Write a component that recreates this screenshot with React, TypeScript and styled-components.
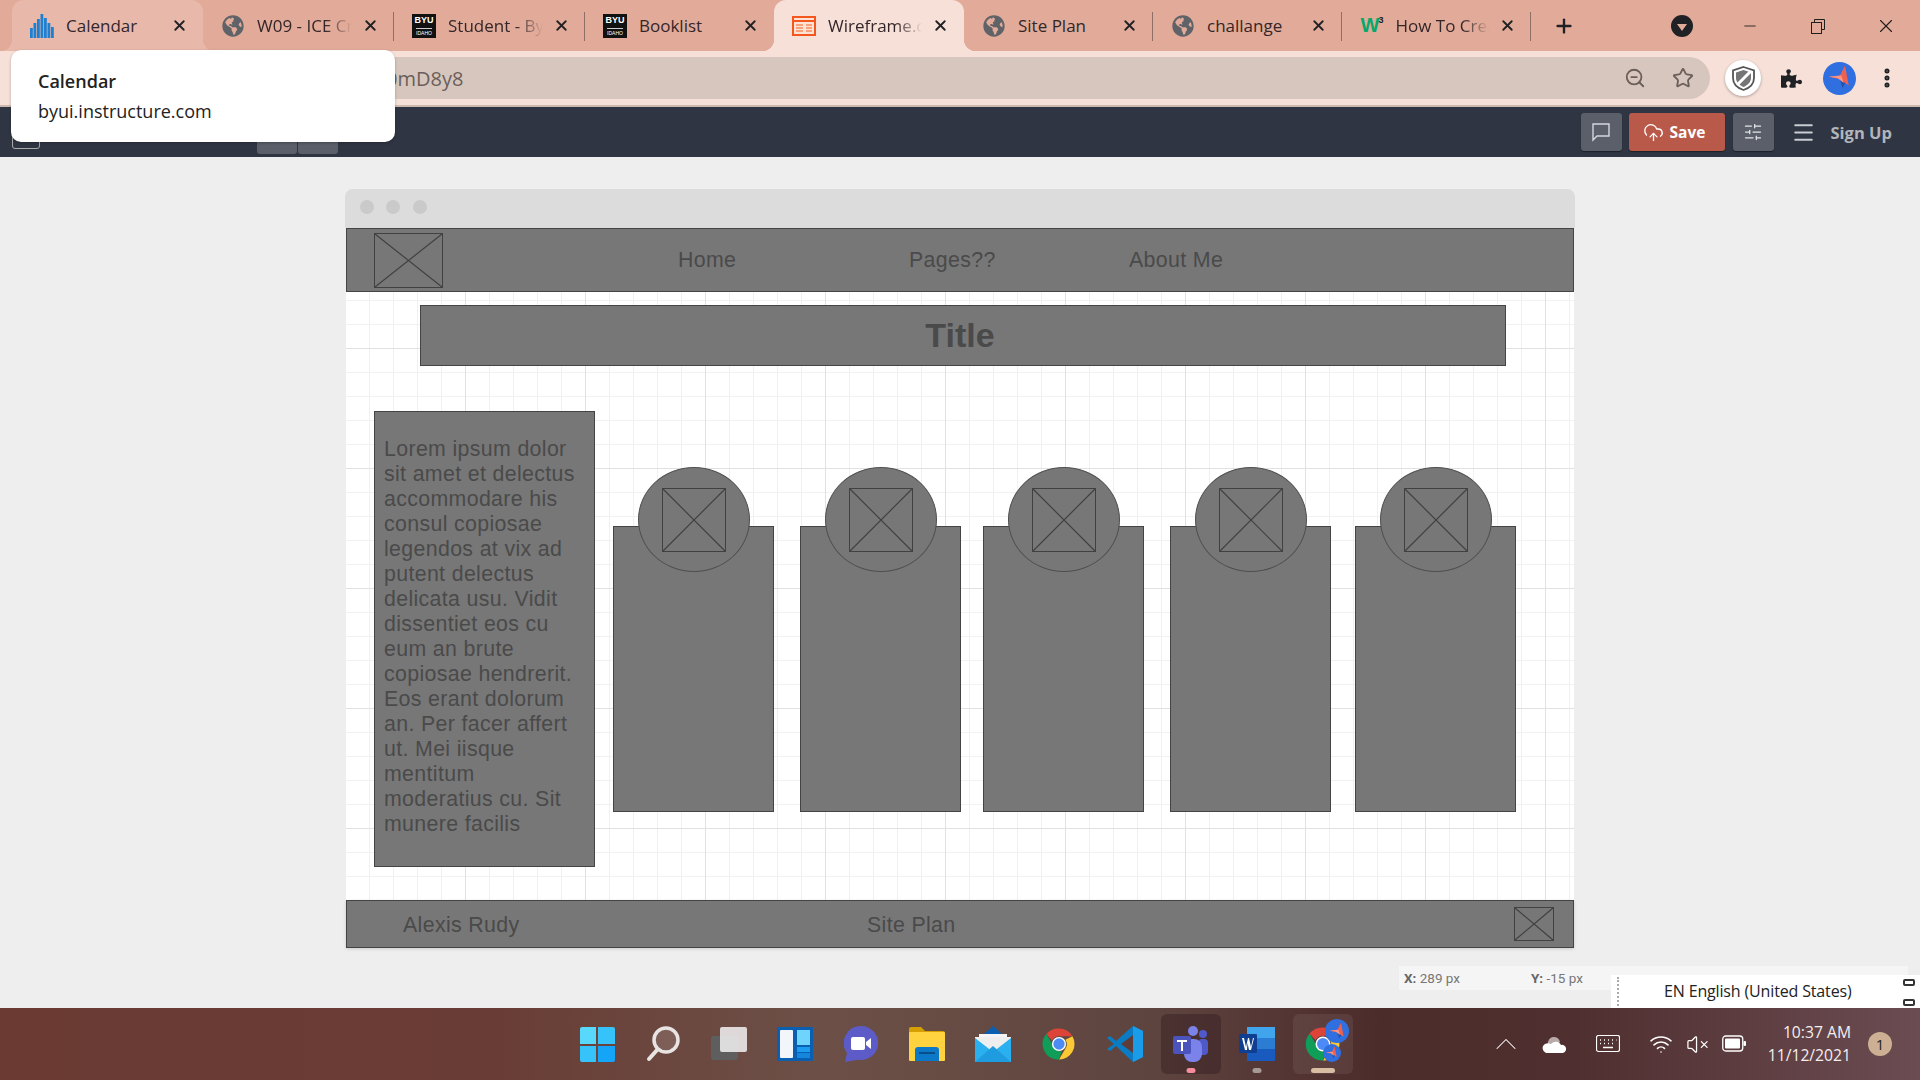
import { FC, ReactNode } from 'react';
import styled, { createGlobalStyle, css } from 'styled-components';
import {
	ChevronUp,
	CloudUpload,
	Menu,
	Minus,
	MoreVertical,
	Plus,
	SlidersHorizontal,
	Star,
	VolumeX,
	Wifi,
	X,
	ZoomOut,
} from 'lucide-react';
import { FaGlobeAmericas, FaPuzzlePiece } from 'react-icons/fa';

const GlobalStyle = createGlobalStyle`
	html, body {
		margin: 0;
		padding: 0;
		height: 100%;
		overflow: hidden;
	}
	* {
		box-sizing: border-box;
	}
`;

const Screen = styled.div`
	position: relative;
	display: flex;
	flex-direction: column;
	width: 1920px;
	height: 1080px;
	overflow: hidden;
	background: #eeeeee;
	font-family: 'Open Sans', 'Liberation Sans', sans-serif;
`;

/* browser tabs */
const TabStrip = styled.div`
	display: flex;
	align-items: stretch;
	height: 51px;
	padding-left: 12px;
	background: #e2ab99;
`;

const flare = (color: string) => css`
	&::before,
	&::after {
		content: '';
		position: absolute;
		bottom: 0;
		width: 12px;
		height: 12px;
	}
	&::before {
		left: -12px;
		background: radial-gradient(circle at 0 0, transparent 12px, ${color} 12.5px);
	}
	&::after {
		right: -12px;
		background: radial-gradient(circle at 100% 0, transparent 12px, ${color} 12.5px);
	}
`;

const Tab = styled.div<{ $state?: 'active' | 'hover'; $sep?: boolean; $width: number }>`
	position: relative;
	display: flex;
	align-items: center;
	flex: none;
	width: ${(p) => p.$width}px;
	padding: 0 15px 0 18px;
	border-radius: 12px 12px 0 0;
	background: ${(p) =>
		p.$state === 'active' ? '#f6e0d8' : p.$state === 'hover' ? '#e8b9aa' : 'transparent'};

	${(p) => p.$state === 'active' && flare('#f6e0d8')}
	${(p) => p.$state === 'hover' && flare('#e8b9aa')}

	${(p) =>
		p.$sep &&
		css`
			&::after {
				content: '';
				position: absolute;
				right: 0;
				top: 12px;
				bottom: 10px;
				width: 1px;
				background: #8d6f65;
			}
		`}
`;

const TabIcon = styled.span`
	display: flex;
	align-items: center;
	justify-content: center;
	flex: none;
	width: 24px;
	height: 24px;
	color: #5f6368;
`;

const TabLabel = styled.span<{ $fade?: boolean }>`
	flex: 1;
	margin-left: 12px;
	overflow: hidden;
	white-space: nowrap;
	font-size: 17px;
	color: #33262a;
	${(p) => p.$fade && 'mask-image: linear-gradient(to right, #000 72%, transparent 100%);'}
`;

const TabClose = styled.span`
	display: flex;
	flex: none;
	margin-left: 10px;
	color: #202124;
`;

const ByuBadge = styled.span`
	display: flex;
	flex-direction: column;
	align-items: center;
	justify-content: center;
	width: 24px;
	height: 24px;
	background: #111;
	color: #fff;
	font-family: 'Liberation Sans', sans-serif;
	font-weight: 700;
	font-size: 9px;
	line-height: 1;
	overflow: hidden;

	small {
		margin-top: 3px;
		padding-top: 2px;
		border-top: 1px solid #ccc;
		font-size: 5px;
		font-weight: 400;
	}
`;

const W3Badge = styled.span`
	color: #04aa6d;
	font-family: 'Liberation Sans', sans-serif;
	font-weight: 700;
	font-size: 20px;
	letter-spacing: -1px;

	sup {
		font-size: 9px;
		color: #222;
		vertical-align: 9px;
		line-height: 0;
	}
`;

const NewTab = styled.span`
	display: flex;
	align-items: center;
	margin-left: 22px;
	color: #202124;
`;

const WindowControls = styled.div`
	display: flex;
	align-items: center;
	margin-left: auto;
	color: #1f1f1f;
`;

const TabSearch = styled.span`
	display: flex;
	align-items: center;
	justify-content: center;
	width: 22px;
	height: 22px;
	margin-right: 23px;
	border-radius: 50%;
	background: #202124;

	&::after {
		content: '';
		margin-top: 3px;
		border-left: 5px solid transparent;
		border-right: 5px solid transparent;
		border-top: 7px solid #e2ab99;
	}
`;

const WindowButton = styled.span<{ $width: number }>`
	display: flex;
	justify-content: center;
	width: ${(p) => p.$width}px;
`;

/* address bar row */
const Toolbar = styled.div`
	display: flex;
	align-items: center;
	height: 56px;
	padding-left: 150px;
	background: #f6e0d8;
	border-bottom: 2px solid #cdb9b0;
`;

const Omnibox = styled.div`
	display: flex;
	align-items: center;
	width: 1560px;
	height: 42px;
	padding: 0 16px 0 236px;
	border-radius: 21px;
	background: #d7c6be;
	color: #6b5f5a;
	font-size: 20px;
`;

const OmniboxIcons = styled.div`
	display: flex;
	align-items: center;
	gap: 26px;
	margin-left: auto;
	color: #6b5f5a;
`;

const ToolbarIcons = styled.div`
	display: flex;
	align-items: center;
	margin-left: 15px;
	color: #202124;
`;

const ShieldButton = styled.span`
	display: flex;
	align-items: center;
	justify-content: center;
	width: 36px;
	height: 36px;
	border-radius: 50%;
	background: #fff;
	box-shadow: 0 1px 3px rgba(0, 0, 0, 0.3);
`;

const Avatar = styled.span<{ $size: number }>`
	display: flex;
	align-items: center;
	justify-content: center;
	flex: none;
	width: ${(p) => p.$size}px;
	height: ${(p) => p.$size}px;
	border-radius: 50%;
	background: #2f6fe0;
`;

const ToolbarAvatar = styled(Avatar)`
	margin-left: 21px;
`;

const PuzzleWrap = styled.span`
	display: flex;
	margin-left: 20px;
`;

const DotsWrap = styled.span`
	display: flex;
	margin-left: 19px;
`;

/* wireframe.cc app bar */
const AppBar = styled.div`
	position: relative;
	display: flex;
	align-items: center;
	flex: none;
	height: 50px;
	padding-right: 28px;
	background: #2f3542;
	color: #e4e6e9;
`;

const AppLogo = styled.span`
	width: 28px;
	height: 34px;
	margin-left: 12px;
	border: 1px solid #aaa;
	border-radius: 3px;
`;

const AppGroup = styled.div`
	display: flex;
	gap: 1px;
	margin: 6px 0 0 217px;
	height: 38px;
`;

const AppGroupButton = styled.span`
	width: 40px;
	border-radius: 3px;
	background: #5a5f69;
`;

const AppActions = styled.div`
	display: flex;
	align-items: center;
	margin-left: auto;
	font-size: 16px;
	font-weight: 700;
`;

const SquareButton = styled.span`
	display: flex;
	align-items: center;
	justify-content: center;
	width: 41px;
	height: 38px;
	border-radius: 3px;
	background: #5a5f69;
	box-shadow: 0 1px 1px rgba(0, 0, 0, 0.4);
`;

const SaveButton = styled.span`
	display: flex;
	align-items: center;
	gap: 6px;
	width: 96px;
	height: 38px;
	margin: 0 8px 0 7px;
	padding-left: 14px;
	border-radius: 3px;
	background: #b9594a;
	box-shadow: 0 1px 1px rgba(0, 0, 0, 0.4);
	color: #fff;
	font-size: 15.5px;
`;

const SignUp = styled.span`
	margin-left: 15px;
	font-size: 16.5px;
	color: #b2b6bc;
`;

const MenuWrap = styled.span`
	display: flex;
	margin-left: 17px;
	color: #c9ccd1;
`;

/* the wireframe canvas */
const Page = styled.div`
	flex: 1;
	padding-top: 32px;
`;

const Frame = styled.div`
	width: 1230px;
	margin-left: 345px;
	border-radius: 8px 8px 0 0;
`;

const FrameTitle = styled.div`
	display: flex;
	align-items: center;
	gap: 12.3px;
	height: 39px;
	padding: 0 0 3px 15px;
	background: #dcdcdc;
	border-radius: 8px 8px 0 0;
`;

const FrameDot = styled.span`
	width: 14px;
	height: 14px;
	border-radius: 50%;
	background: #cacaca;
`;

const WireBar = styled.div<{ $height: number }>`
	display: flex;
	align-items: center;
	height: ${(p) => p.$height}px;
	margin: 0 1px;
	background: #777777;
	border: 1px solid #444444;
	color: #4a4a4a;
	font-family: 'Liberation Sans', sans-serif;
	font-size: 21.33px;
	letter-spacing: 0.35px;
`;

const FooterBar = styled(WireBar)`
	padding-top: 2px;
	box-shadow: 0 1px 3px rgba(0, 0, 0, 0.15);
`;

const WireLabel = styled.span<{ $width: number }>`
	flex: none;
	width: ${(p) => p.$width}px;
`;

const FooterThumb = styled.span`
	display: flex;
	flex: none;
	margin-top: -2px;
`;

const PlaceholderBox = styled.svg<{ $width: number; $height: number }>`
	display: block;
	flex: none;
	width: ${(p) => p.$width}px;
	height: ${(p) => p.$height}px;
	stroke: #414141;
	fill: none;
`;

const Canvas = styled.div`
	height: 608px;
	margin: 0 1px;
	padding-top: 13px;
	background-color: #fff;
	background-image: linear-gradient(#e1e1e1 1px, transparent 1px),
		linear-gradient(90deg, #e1e1e1 1px, transparent 1px),
		linear-gradient(#f1f1f1 1px, transparent 1px),
		linear-gradient(90deg, #f1f1f1 1px, transparent 1px);
	background-size: 120px 120px, 120px 120px, 24px 24px, 24px 24px;
	background-position: 0 56px, 119px 0, 0 8px, 23px 0;
`;

const TitleBar = styled.div`
	display: flex;
	align-items: center;
	justify-content: center;
	width: 1086px;
	height: 61px;
	margin-left: 74px;
	padding-right: 6px;
	background: #777777;
	border: 1px solid #444444;
	color: #4a4a4a;
	font-family: 'Liberation Sans', sans-serif;
	font-size: 34px;
	font-weight: 700;
`;

const ContentRow = styled.div`
	display: flex;
	align-items: flex-start;
	margin-top: 45px;
	padding-left: 28px;
`;

const TextPanel = styled.div`
	flex: none;
	width: 221px;
	height: 456px;
	padding: 25px 9px 0;
	background: #777777;
	border: 1px solid #444444;
	color: #4a4a4a;
	font-family: 'Liberation Sans', sans-serif;
	font-size: 21.33px;
	line-height: 25px;
	letter-spacing: 0.35px;
`;

const Card = styled.div<{ $gap: number }>`
	position: relative;
	flex: none;
	width: 161px;
	height: 286px;
	margin: 115px 0 0 ${(p) => p.$gap}px;
	background: #777777;
	border: 1px solid #444444;
`;

const CardBadge = styled.div`
	position: absolute;
	top: -60px;
	left: 24px;
	display: flex;
	align-items: center;
	justify-content: center;
	width: 112px;
	height: 105px;
	border-radius: 50%;
	background: #777777;
	border: 1px solid #4f4f4f;
`;

const CoordStrip = styled.div`
	display: flex;
	width: 509px;
	height: 24px;
	margin: 18px 0 0 1399px;
	padding-left: 5px;
	align-items: center;
	background: #f5f5f5;
	color: #777;
	font-family: 'Roboto', sans-serif;
	font-size: 13.5px;

	b {
		color: #666;
	}
`;

const CoordCell = styled.span`
	width: 127px;
`;

const LanguageBar = styled.div`
	position: absolute;
	right: 0;
	bottom: 72px;
	display: flex;
	align-items: center;
	width: 309px;
	height: 33px;
	padding: 0 0 2px 53px;
	background: #fff;
	color: #222;
	font-family: 'Open Sans', sans-serif;
	font-size: 16px;
	letter-spacing: -0.15px;

	&::before {
		content: '';
		position: absolute;
		left: 6px;
		top: 2px;
		bottom: 2px;
		border-left: 2px dotted #aaa;
	}
`;

const LanguageIcons = styled.span`
	position: absolute;
	right: 5px;
	top: 4px;
	bottom: 2px;
	display: flex;
	flex-direction: column;
	justify-content: space-between;

	i {
		display: block;
		width: 12px;
		height: 7px;
		border: 2px solid #333;
		border-radius: 2px;
	}
`;

/* windows taskbar */
const Taskbar = styled.div`
	position: relative;
	display: flex;
	align-items: center;
	flex: none;
	height: 72px;
	padding-left: 567px;
	background: linear-gradient(
		90deg,
		#6a3a33 0%,
		#693c35 25%,
		#6c5047 43%,
		#5e443f 60%,
		#4c2b2b 72%,
		#4f2f2f 82%,
		#6b4c52 100%
	);
`;

const Slot = styled.div<{ $state?: 'open' | 'active' }>`
	position: relative;
	display: flex;
	align-items: center;
	justify-content: center;
	flex: none;
	width: 60px;
	height: 60px;
	margin-right: 6px;
	border-radius: 6px;
	background: ${(p) =>
		p.$state === 'open'
			? 'rgba(40, 20, 25, 0.35)'
			: p.$state === 'active'
			? 'rgba(255, 255, 255, 0.07)'
			: 'transparent'};
`;

const RunDot = styled.span<{ $color: string; $width: number }>`
	position: absolute;
	left: 50%;
	bottom: 1px;
	width: ${(p) => p.$width}px;
	height: 5px;
	transform: translateX(-50%);
	border-radius: 3px;
	background: ${(p) => p.$color};
`;

const SlotBadge = styled.span<{ $top: number; $left: number }>`
	position: absolute;
	top: ${(p) => p.$top}px;
	left: ${(p) => p.$left}px;
	display: flex;
`;

const Tray = styled.div`
	position: absolute;
	right: 0;
	top: 0;
	bottom: 0;
	display: flex;
	align-items: center;
	width: 436px;
	color: #fff;
`;

const TrayIcon = styled.span<{ $width: number }>`
	display: flex;
	justify-content: center;
	flex: none;
	width: ${(p) => p.$width}px;
`;

const Clock = styled.div`
	flex: none;
	width: 92px;
	text-align: right;
	font-size: 15.7px;
	line-height: 23px;
	color: #f4eeee;
	white-space: nowrap;
`;

const NotifyBadge = styled.span`
	display: flex;
	align-items: center;
	justify-content: center;
	flex: none;
	width: 24px;
	height: 24px;
	margin-left: 17px;
	border-radius: 50%;
	background: #cdb094;
	color: #222;
	font-size: 15px;
`;

const ShellTooltip = styled.div`
	position: absolute;
	left: 11px;
	top: 50px;
	display: flex;
	flex-direction: column;
	justify-content: center;
	gap: 6px;
	width: 384px;
	height: 92px;
	padding-left: 27px;
	border-radius: 10px;
	background: #fff;
	box-shadow: 0 1px 3px rgba(0, 0, 0, 0.25);
	color: #222;
	font-size: 18px;
	line-height: 24px;

	strong {
		font-weight: 600;
	}
`;

const CalendarIcon = () => (
	<svg width="24" height="24" viewBox="0 0 24 24" fill="#1f7fd0">
		<rect x="0" y="14" width="2.800" height="10" />
		<rect x="3.500" y="9" width="2.800" height="15" />
		<rect x="7" y="5" width="2.800" height="19" />
		<rect x="10.500" y="0" width="2.800" height="24" />
		<rect x="14" y="4" width="2.800" height="20" />
		<rect x="17.500" y="9" width="2.800" height="15" />
		<rect x="21" y="13" width="2.800" height="11" />
	</svg>
);

const WireframeIcon = () => (
	<svg width="24" height="20" viewBox="0 0 24 20">
		<rect x="1" y="1" width="22" height="18" fill="#fde3d5" stroke="#f4561d" strokeWidth="2" />
		<path d="M1 5h22" stroke="#f4561d" strokeWidth="2" />
		<path d="M4 9h7M4 12h7M4 15h7M14 9h6M14 12h6M14 15h6" stroke="#f58a5c" strokeWidth="1.500" />
	</svg>
);

const Globe = () => <FaGlobeAmericas size={22} />;

const Byu = () => (
	<ByuBadge>
		BYU
		<small>IDAHO</small>
	</ByuBadge>
);

const W3 = () => (
	<W3Badge>
		W<sup>3</sup>
	</W3Badge>
);

interface ITab {
	label: string;
	icon: ReactNode;
	width: number;
	state?: 'active' | 'hover';
	sep?: boolean;
	fade?: boolean;
}

const tabs: ITab[] = [
	{ label: 'Calendar', icon: <CalendarIcon />, width: 191, state: 'hover' },
	{ label: 'W09 - ICE Crud', icon: <Globe />, width: 191, sep: true, fade: true },
	{ label: 'Student - Byui', icon: <Byu />, width: 191, sep: true, fade: true },
	{ label: 'Booklist', icon: <Byu />, width: 189 },
	{ label: 'Wireframe.cc', icon: <WireframeIcon />, width: 190, state: 'active', fade: true },
	{ label: 'Site Plan', icon: <Globe />, width: 189, sep: true },
	{ label: 'challange', icon: <Globe />, width: 188.5, sep: true },
	{ label: 'How To Create', icon: <W3 />, width: 189.5, sep: true, fade: true },
];

const loremText =
	'Lorem ipsum dolor sit amet et delectus accommodare his consul copiosae legendos at vix ad putent delectus delicata usu. Vidit dissentiet eos cu eum an brute copiosae hendrerit. Eos erant dolorum an. Per facer affert ut. Mei iisque mentitum moderatius cu. Sit munere facilis';

const cardGaps = [18, 26, 22, 26, 24];

const Placeholder: FC<{ width: number; height: number }> = ({ width, height }) => (
	<PlaceholderBox $width={width} $height={height} viewBox={`0 0 ${width} ${height}`}>
		<rect x="0.5" y="0.5" width={width - 1} height={height - 1} />
		<path d={`M1 1L${width - 1} ${height - 1}M${width - 1} 1L1 ${height - 1}`} strokeWidth="1.2" />
	</PlaceholderBox>
);

const StartIcon = () => (
	<svg width="35" height="35" viewBox="0 0 35 35">
		<path d="M2 0h14v17H0V2a2 2 0 0 1 2-2z" fill="#58d8fb" />
		<path d="M18 0h15a2 2 0 0 1 2 2v15H18z" fill="#36c3fa" />
		<path d="M0 19h16v16H2a2 2 0 0 1-2-2z" fill="#36c3fa" />
		<path d="M18 19h17v14a2 2 0 0 1-2 2H18z" fill="#14a5f8" />
	</svg>
);

const SearchIcon = () => (
	<svg width="34" height="36" viewBox="0 0 34 36" fill="rgba(255,255,255,0.13)" stroke="#e8e4e2" strokeWidth="3.500" strokeLinecap="round">
		<circle cx="20" cy="14" r="12" />
		<path d="M11 24L3 33" strokeWidth="4" />
	</svg>
);

const TaskViewIcon = () => (
	<svg width="36" height="34" viewBox="0 0 36 34">
		<rect x="0" y="9" width="27" height="24" rx="2" fill="#5e5e5e" />
		<rect x="9" y="0" width="27" height="25" rx="2" fill="#f2f2f2" fillOpacity="0.85" />
	</svg>
);

const WidgetsIcon = () => (
	<svg width="36" height="34" viewBox="0 0 36 34">
		<rect width="36" height="34" rx="1" fill="#0a5fb0" />
		<rect x="3" y="3" width="13" height="28" rx="1" fill="#f2f6fa" />
		<rect x="20" y="3" width="13" height="15" fill="#6fd4fb" />
		<rect x="20" y="20" width="13" height="5" fill="#1b9cf0" />
		<rect x="20" y="26" width="13" height="5" fill="#1486dc" />
	</svg>
);

const MeetIcon = () => (
	<svg width="34" height="36" viewBox="0 0 34 36">
		<path d="M17 0a17 17 0 1 1-3 33.700L1 36l2-9A17 17 0 0 1 17 0z" fill="#5c5bc8" />
		<rect x="7" y="11" width="14" height="13" rx="2" fill="#fff" />
		<path d="M22 16l5-4v11l-5-4z" fill="#fff" />
	</svg>
);

const ExplorerIcon = () => (
	<svg width="36" height="34" viewBox="0 0 36 34">
		<path d="M0 2a2 2 0 0 1 2-2h10l4 4h18a2 2 0 0 1 2 2v4H0z" fill="#d6a000" />
		<rect x="0" y="5" width="36" height="29" rx="1" fill="#ffd23f" />
		<path d="M6 34v-11a3 3 0 0 1 3-3h18a3 3 0 0 1 3 3v11z" fill="#0c78c8" />
		<rect x="10" y="25" width="16" height="2" fill="#084e88" />
	</svg>
);

const MailIcon = () => (
	<svg width="36" height="36" viewBox="0 0 36 36">
		<path d="M18 0L36 16H0z" fill="#0a5fb0" />
		<rect x="4" y="8" width="28" height="16" fill="#f4f4f4" />
		<rect x="0" y="12" width="36" height="24" fill="#2ab0ee" />
		<path d="M0 12l18 14 18-14v-1H0z" fill="#eeeeee" />
		<path d="M0 36L18 20l18 16z" fill="#1f9be0" />
	</svg>
);

const ChromeIcon: FC<{ size?: number }> = ({ size = 34 }) => (
	<svg width={size} height={size} viewBox="0 0 48 48">
		<path d="M24 2a22 22 0 0 1 19 11H24a11 11 0 0 0-10 6L6 10A22 22 0 0 1 24 2z" fill="#db4437" />
		<path d="M43 13a22 22 0 0 1-19 33l10-17a11 11 0 0 0-1-11z" fill="#fcc934" />
		<path d="M6 10l9 15a11 11 0 0 0 13 9l-4 12A22 22 0 0 1 6 10z" fill="#0f9d58" />
		<circle cx="24" cy="24" r="10" fill="#fff" />
		<circle cx="24" cy="24" r="8" fill="#4c8bf5" />
	</svg>
);

const VsCodeIcon = () => (
	<svg width="36" height="36" viewBox="0 0 36 36">
		<path d="M26 0l10 5v26l-10 5L9 20l-6 5-3-2 7-5-7-6 3-2 6 5z" fill="#0a7cc4" />
		<path d="M26 0l10 5v26l-10 5z" fill="#1b9ce8" />
		<path d="M26 9L14 18l12 9z" fill="#5f3c37" />
	</svg>
);

const TeamsIcon = () => (
	<svg width="36" height="36" viewBox="0 0 36 36">
		<circle cx="20" cy="5" r="5" fill="#7b83eb" />
		<circle cx="30" cy="8" r="4" fill="#5059c9" />
		<rect x="25" y="13" width="10" height="16" rx="4" fill="#5059c9" />
		<rect x="11" y="13" width="18" height="23" rx="8" fill="#7b83eb" />
		<rect x="0" y="10" width="18" height="18" rx="2" fill="#4b53bc" />
		<path d="M4 14h10v2h-4v9H8v-9H4z" fill="#fff" />
	</svg>
);

const WordIcon = () => (
	<svg width="36" height="34" viewBox="0 0 36 34">
		<rect x="8" y="0" width="28" height="12" fill="#41a5ee" />
		<rect x="8" y="11" width="28" height="12" fill="#2b7cd3" />
		<rect x="8" y="22" width="28" height="12" fill="#185abd" />
		<rect x="0" y="7" width="18" height="19" rx="1" fill="#103f91" />
		<path d="M3 11h2l2 9 2-9h1l2 9 2-9h1l-3 12h-2l-1.500-7L8 23H6z" fill="#fff" />
	</svg>
);

const CommentIcon = () => (
	<svg width="20" height="20" viewBox="0 0 20 20" fill="none" stroke="#d5d8dc" strokeWidth="1.400">
		<path d="M2 2h16v12H6l-4 4z" />
	</svg>
);

const BirdIcon: FC<{ size: number }> = ({ size }) => (
	<svg width={size} height={size} viewBox="0 0 24 24">
		<path d="M14 20l-2-7 5 1z" fill="#24509f" />
		<path d="M16 2l3 16-7-5-9-2 9-1z" fill="#f0604f" />
		<path d="M3 11l10-1 2 6-5-4z" fill="#f8988a" />
	</svg>
);

const ShieldIcon = () => (
	<svg width="23" height="25" viewBox="0 0 23 25">
		<path d="M11.500 1L22 4.500V12c0 6-4.500 10-10.500 12C5.500 22 1 18 1 12V4.500z" fill="#fff" stroke="#555" strokeWidth="1.800" />
		<path d="M11.500 4l7.500 2.500V12c0 4-3 7-7.500 9-4.500-2-7.500-5-7.500-9V6.500z" fill="#757575" />
		<path d="M5 5l13 13" stroke="#fff" strokeWidth="3" transform="rotate(90 11.500 12)" />
	</svg>
);

const OneDriveIcon = () => (
	<svg width="26" height="18" viewBox="0 0 26 18">
		<path d="M7 9a6 6 0 0 1 12-2l-5 5z" fill="#b9a9a9" />
		<path d="M5 18a5 5 0 0 1-1-9 7 7 0 0 1 6 0 6 6 0 0 1 10 1 4 4 0 0 1 2 8z" fill="#fff" />
	</svg>
);

const KeyboardIcon = () => (
	<svg width="24" height="18" viewBox="0 0 24 18" fill="none" stroke="#fff">
		<rect x="0.500" y="0.500" width="23" height="16" rx="2" strokeWidth="1.200" />
		<path d="M4 5h1M8 5h1M12 5h1M16 5h1M20 5h0.500M4 8.500h1M8 8.500h1M12 8.500h1M16 8.500h1M7 12.500h10" strokeWidth="1.500" />
	</svg>
);

const BatteryIcon = () => (
	<svg width="24" height="18" viewBox="0 0 24 18" fill="none" stroke="#fff">
		<rect x="0.750" y="1" width="20" height="15" rx="3" strokeWidth="1.300" />
		<rect x="3" y="3.500" width="15" height="10" rx="1" fill="#fff" stroke="none" />
		<rect x="21.500" y="6" width="2.500" height="5" rx="1" fill="#fff" stroke="none" />
	</svg>
);

const App: FC = () => {
	return (
		<Screen>
			<GlobalStyle />
			<TabStrip>
				{tabs.map((tab) => (
					<Tab key={tab.label} $state={tab.state} $sep={tab.sep} $width={tab.width}>
						<TabIcon>{tab.icon}</TabIcon>
						<TabLabel $fade={tab.fade}>{tab.label}</TabLabel>
						<TabClose>
							<X size={17} strokeWidth={2.6} />
						</TabClose>
					</Tab>
				))}
				<NewTab>
					<Plus size={22} strokeWidth={2.6} />
				</NewTab>
				<WindowControls>
					<TabSearch />
					<WindowButton $width={68}>
						<Minus size={18} strokeWidth={1.2} />
					</WindowButton>
					<WindowButton $width={68}>
						<svg width="16" height="16" viewBox="0 0 16 16" fill="none" stroke="currentColor">
							<rect x="1.500" y="4.500" width="10" height="11" />
							<path d="M4.500 4V1.500h10v10H12" />
						</svg>
					</WindowButton>
					<WindowButton $width={68}>
						<X size={22} strokeWidth={1.2} />
					</WindowButton>
				</WindowControls>
			</TabStrip>

			<Toolbar>
				<Omnibox>
					<span>0mD8y8</span>
					<OmniboxIcons>
						<ZoomOut size={22} />
						<Star size={22} />
					</OmniboxIcons>
				</Omnibox>
				<ToolbarIcons>
					<ShieldButton>
						<ShieldIcon />
					</ShieldButton>
					<PuzzleWrap>
						<FaPuzzlePiece size={21} />
					</PuzzleWrap>
					<ToolbarAvatar $size={33}>
						<BirdIcon size={30} />
					</ToolbarAvatar>
					<DotsWrap>
						<MoreVertical size={24} strokeWidth={3} />
					</DotsWrap>
				</ToolbarIcons>
			</Toolbar>

			<AppBar>
				<AppLogo />
				<AppGroup>
					<AppGroupButton />
					<AppGroupButton />
				</AppGroup>
				<AppActions>
					<SquareButton>
						<CommentIcon />
					</SquareButton>
					<SaveButton>
						<CloudUpload size={21} strokeWidth={1.5} />
						Save
					</SaveButton>
					<SquareButton>
						<SlidersHorizontal size={20} strokeWidth={1.5} />
					</SquareButton>
					<MenuWrap>
						<Menu size={25} strokeWidth={1.8} />
					</MenuWrap>
					<SignUp>Sign Up</SignUp>
				</AppActions>
			</AppBar>

			<Page>
				<Frame>
					<FrameTitle>
						<FrameDot />
						<FrameDot />
						<FrameDot />
					</FrameTitle>
					<WireBar $height={64}>
						<WireLabel $width={27} />
						<Placeholder width={69} height={55} />
						<WireLabel $width={235} />
						<WireLabel $width={231}>Home</WireLabel>
						<WireLabel $width={220}>Pages??</WireLabel>
						<WireLabel $width={120}>About Me</WireLabel>
					</WireBar>
					<Canvas>
						<TitleBar>Title</TitleBar>
						<ContentRow>
							<TextPanel>{loremText}</TextPanel>
							{cardGaps.map((gap, index) => (
								<Card key={index} $gap={gap}>
									<CardBadge>
										<Placeholder width={64} height={64} />
									</CardBadge>
								</Card>
							))}
						</ContentRow>
					</Canvas>
					<FooterBar $height={48}>
						<WireLabel $width={56} />
						<WireLabel $width={464}>Alexis Rudy</WireLabel>
						<WireLabel $width={647}>Site Plan</WireLabel>
						<FooterThumb>
							<Placeholder width={40} height={34} />
						</FooterThumb>
					</FooterBar>
				</Frame>
				<CoordStrip>
					<CoordCell>
						<b>X:</b> 289 px
					</CoordCell>
					<CoordCell>
						<b>Y:</b> -15 px
					</CoordCell>
				</CoordStrip>
			</Page>

			<LanguageBar>
				EN English (United States)
				<LanguageIcons>
					<i />
					<i />
				</LanguageIcons>
			</LanguageBar>

			<Taskbar>
				<Slot>
					<StartIcon />
				</Slot>
				<Slot>
					<SearchIcon />
				</Slot>
				<Slot>
					<TaskViewIcon />
				</Slot>
				<Slot>
					<WidgetsIcon />
				</Slot>
				<Slot>
					<MeetIcon />
				</Slot>
				<Slot>
					<ExplorerIcon />
				</Slot>
				<Slot>
					<MailIcon />
				</Slot>
				<Slot>
					<ChromeIcon />
				</Slot>
				<Slot>
					<VsCodeIcon />
				</Slot>
				<Slot $state="open">
					<TeamsIcon />
					<RunDot $color="#f58d9c" $width={9} />
				</Slot>
				<Slot>
					<WordIcon />
					<RunDot $color="#a59a95" $width={9} />
				</Slot>
				<Slot $state="active">
					<ChromeIcon size={36} />
					<SlotBadge $top={5} $left={32}>
						<Avatar $size={24}>
							<BirdIcon size={21} />
						</Avatar>
					</SlotBadge>
					<SlotBadge $top={30} $left={30}>
						<Avatar $size={18}>
							<BirdIcon size={16} />
						</Avatar>
					</SlotBadge>
					<RunDot $color="#d9bda2" $width={24} />
				</Slot>
				<Tray>
					<TrayIcon $width={44}>
						<ChevronUp size={36} strokeWidth={0.7} />
					</TrayIcon>
					<TrayIcon $width={52}>
						<OneDriveIcon />
					</TrayIcon>
					<TrayIcon $width={56}>
						<KeyboardIcon />
					</TrayIcon>
					<TrayIcon $width={50}>
						<Wifi size={24} strokeWidth={1.6} />
					</TrayIcon>
					<TrayIcon $width={23}>
						<VolumeX size={23} strokeWidth={1.3} />
					</TrayIcon>
					<TrayIcon $width={50}>
						<BatteryIcon />
					</TrayIcon>
					<Clock>
						10:37 AM
						<br />
						11/12/2021
					</Clock>
					<NotifyBadge>1</NotifyBadge>
				</Tray>
			</Taskbar>

			<ShellTooltip>
				<strong>Calendar</strong>
				<span>byui.instructure.com</span>
			</ShellTooltip>
		</Screen>
	);
};

export default App;
